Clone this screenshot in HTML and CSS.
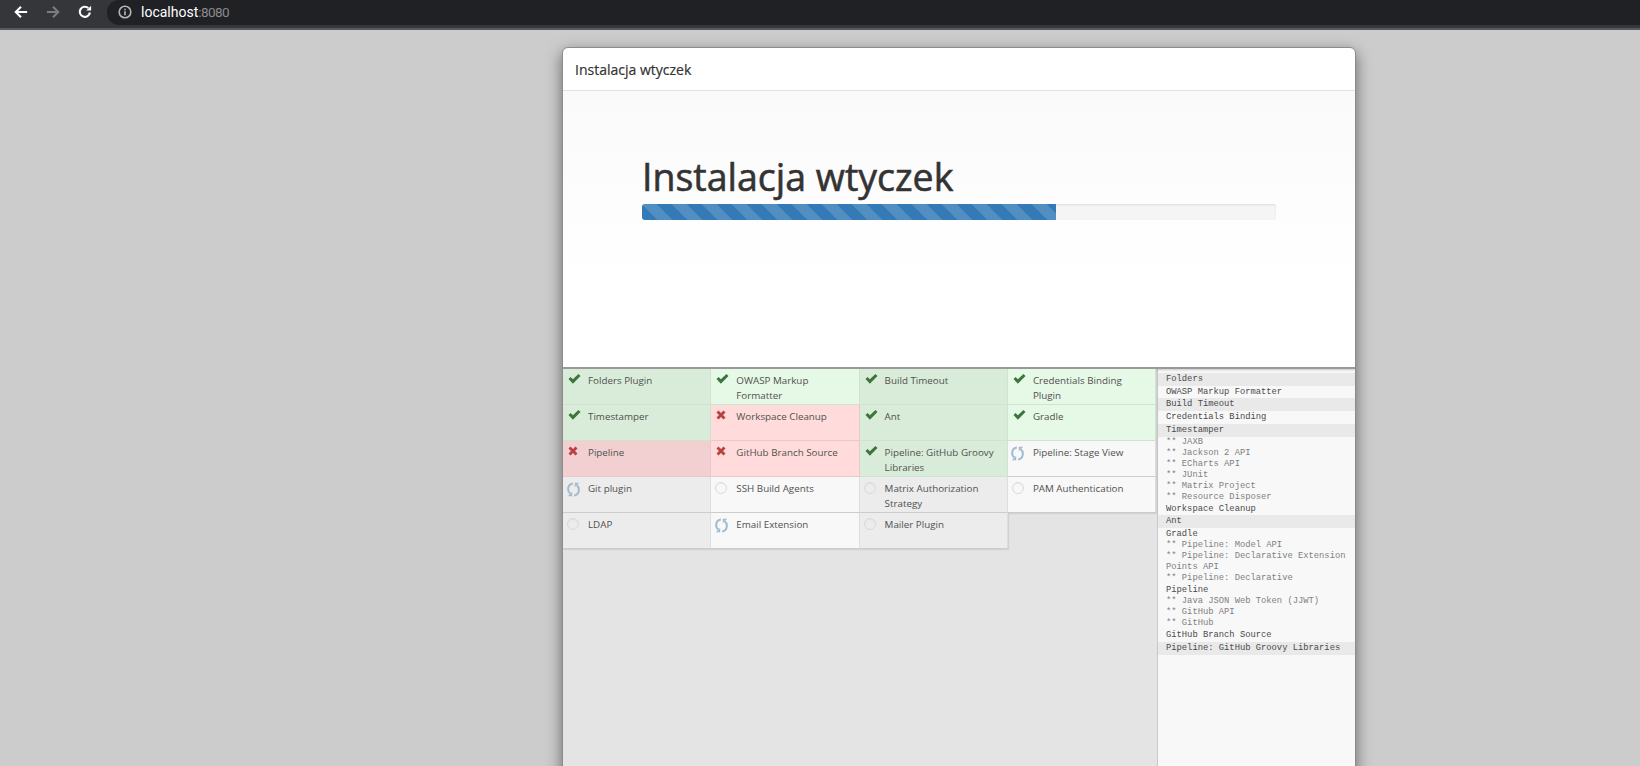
FILE: index.html
```html
<!DOCTYPE html>
<html lang="pl">
<head>
  <meta charset="UTF-8" />
  <title>Instalacja wtyczek</title>
  <link rel="stylesheet" href="styles.css">
</head>
<body>
  <svg class="icon-defs" width="0" height="0">
    <symbol id="i-check" viewBox="0 0 14 11"><path d="M0.4 5.6 2.7 3.3 5.2 5.8 11.3 0 13.6 2.3 5.2 10.6z"/></symbol>
    <symbol id="i-cross" viewBox="0 0 12 12"><path d="M0.6 3 3 0.6 6 3.6 9 0.6 11.4 3 8.4 6 11.4 9 9 11.4 6 8.4 3 11.4 0.6 9 3.6 6z"/></symbol>
    <symbol id="i-spin" viewBox="0 0 12 14">
      <path class="arc" d="M5.4 1.4C2.6 1.9 1 4.1 1 6.8c0 1.7.7 3.1 1.9 4"/>
      <path d="M.7 13.2 4.8 13.4 4.8 9.2z"/>
      <path class="arc" d="M6.6 12.6c2.8-.5 4.4-2.7 4.4-5.4 0-1.7-.7-3.1-1.9-4"/>
      <path d="M11.3.8 7.2 .6 7.2 4.8z"/>
    </symbol>
  </svg>

  <header class="toolbar">
    <div class="nav-buttons">
      <svg class="nav-icon" viewBox="0 0 16 16"><path d="M15 8H2M8 2 2 8l6 6"/></svg>
      <svg class="nav-icon nav-disabled" viewBox="0 0 16 16"><path d="M1 8h13M8 2l6 6-6 6"/></svg>
      <svg class="nav-icon" viewBox="0 0 16 16"><path d="M13.6 8.6A5.8 5.8 0 1 1 11.8 3.5"/><path class="fill" d="M9.4 6.4H15V.8z"/></svg>
    </div>
    <div class="address">
      <svg class="info-icon" viewBox="0 0 14 14"><circle cx="7" cy="7" r="5.8"/><path d="M7 6.2v4M7 3.8v1.4"/></svg>
      <span class="host">localhost</span><span class="port">:8080</span>
    </div>
  </header>

  <main class="page">
    <div class="modal">
      <div class="modal-title">Instalacja wtyczek</div>
      <div class="modal-top">
        <h1>Instalacja wtyczek</h1>
        <div class="progress"><div class="progress-bar"></div></div>
      </div>
      <div class="modal-lower">
        <div class="plugins">
          <div class="plugin ok"><svg class="ico"><use href="#i-check"/></svg>Folders Plugin</div>
          <div class="plugin ok"><svg class="ico"><use href="#i-check"/></svg>OWASP Markup Formatter</div>
          <div class="plugin ok"><svg class="ico"><use href="#i-check"/></svg>Build Timeout</div>
          <div class="plugin ok"><svg class="ico"><use href="#i-check"/></svg>Credentials Binding Plugin</div>
          <div class="plugin ok dark"><svg class="ico"><use href="#i-check"/></svg>Timestamper</div>
          <div class="plugin fail light"><svg class="ico"><use href="#i-cross"/></svg>Workspace Cleanup</div>
          <div class="plugin ok dark"><svg class="ico"><use href="#i-check"/></svg>Ant</div>
          <div class="plugin ok light"><svg class="ico"><use href="#i-check"/></svg>Gradle</div>
          <div class="plugin fail"><svg class="ico"><use href="#i-cross"/></svg>Pipeline</div>
          <div class="plugin fail"><svg class="ico"><use href="#i-cross"/></svg>GitHub Branch Source</div>
          <div class="plugin ok"><svg class="ico"><use href="#i-check"/></svg>Pipeline: GitHub Groovy Libraries</div>
          <div class="plugin busy"><svg class="ico"><use href="#i-spin"/></svg>Pipeline: Stage View</div>
          <div class="plugin busy dark"><svg class="ico"><use href="#i-spin"/></svg>Git plugin</div>
          <div class="plugin wait light"><span class="ring"></span>SSH Build Agents</div>
          <div class="plugin wait dark"><span class="ring"></span>Matrix Authorization Strategy</div>
          <div class="plugin wait light"><span class="ring"></span>PAM Authentication</div>
          <div class="plugin wait"><span class="ring"></span>LDAP</div>
          <div class="plugin busy"><svg class="ico"><use href="#i-spin"/></svg>Email Extension</div>
          <div class="plugin wait"><span class="ring"></span>Mailer Plugin</div>
        </div>
        <div class="log">
          <div class="log-line odd">Folders</div>
          <div class="log-line">OWASP Markup Formatter</div>
          <div class="log-line odd">Build Timeout</div>
          <div class="log-line">Credentials Binding</div>
          <div class="log-line odd">Timestamper</div>
          <div class="log-dep">** JAXB</div>
          <div class="log-dep">** Jackson 2 API</div>
          <div class="log-dep">** ECharts API</div>
          <div class="log-dep">** JUnit</div>
          <div class="log-dep">** Matrix Project</div>
          <div class="log-dep">** Resource Disposer</div>
          <div class="log-line">Workspace Cleanup</div>
          <div class="log-line odd">Ant</div>
          <div class="log-line">Gradle</div>
          <div class="log-dep">** Pipeline: Model API</div>
          <div class="log-dep">** Pipeline: Declarative Extension Points API</div>
          <div class="log-dep">** Pipeline: Declarative</div>
          <div class="log-line">Pipeline</div>
          <div class="log-dep">** Java JSON Web Token (JJWT)</div>
          <div class="log-dep">** GitHub API</div>
          <div class="log-dep">** GitHub</div>
          <div class="log-line">GitHub Branch Source</div>
          <div class="log-line odd">Pipeline: GitHub Groovy Libraries</div>
        </div>
      </div>
    </div>
  </main>
</body>
</html>
```

FILE: styles.css
```css
html, body {
  margin: 0;
  height: 100%;
  overflow: hidden;
}
body {
  font-family: "Open Sans", sans-serif;
  background: #ccc;
  display: flex;
  flex-direction: column;
}
.icon-defs {
  position: absolute;
}

/* browser chrome */
.toolbar {
  height: 30px;
  flex: none;
  box-sizing: border-box;
  display: flex;
  align-items: flex-start;
  background: #35363a;
  border-bottom: 2px solid #58595c;
}
.nav-buttons {
  width: 107px;
  flex: none;
  height: 24px;
  display: flex;
  align-items: center;
  padding-left: 14px;
  gap: 18px;
  box-sizing: border-box;
}
.nav-icon {
  width: 14px;
  height: 14px;
  fill: none;
  stroke: #fff;
  stroke-width: 2.4;
}
.nav-icon .fill {
  fill: #fff;
  stroke: none;
}
.nav-disabled {
  stroke: #7b7c7f;
}
.address {
  flex: 1;
  height: 25px;
  background: #202124;
  border-radius: 12px 0 0 12px;
  display: flex;
  align-items: center;
  padding: 0 0 1px 11px;
  box-sizing: border-box;
  font-family: "Roboto", sans-serif;
  font-size: 14px;
}
.info-icon {
  width: 14px;
  height: 14px;
  margin-right: 9px;
  fill: none;
  stroke: #b5b6b8;
  stroke-width: 1.6;
}
.host {
  color: #fff;
}
.port {
  color: #8a8b8e;
  font-size: 13.5px;
  letter-spacing: -0.6px;
}

/* modal */
.page {
  flex: 1;
  min-height: 0;
}
.modal {
  width: 794px;
  height: 760px;
  margin: 17px 0 0 562px;
  background: #fff;
  border: 1px solid #8c8c8c;
  border-radius: 6px;
  box-shadow: 0 5px 15px rgba(0, 0, 0, 0.5);
  box-sizing: border-box;
  overflow: hidden;
  display: flex;
  flex-direction: column;
}
.modal-title {
  height: 43px;
  flex: none;
  box-sizing: border-box;
  padding: 14px 12px 0;
  font-size: 14px;
  line-height: 16px;
  color: #333;
  -webkit-text-stroke: 0.2px #333;
  border-bottom: 1px solid #e5e5e5;
}
.modal-top {
  height: 278px;
  flex: none;
  box-sizing: border-box;
  padding: 59px 79px 0;
  background: linear-gradient(#fafafa, #fff 70%);
  border-bottom: 2px solid #999;
  position: relative;
  box-shadow: 0 1px 2px rgba(0, 0, 0, 0.2);
}
h1 {
  margin: 0;
  font-size: 37.5px;
  line-height: 54px;
  font-weight: 400;
  -webkit-text-stroke: 0.6px #333;
  color: #333;
}
.progress {
  height: 16px;
  background: #f5f5f5;
  border-radius: 3px;
  box-shadow: inset 0 1px 2px rgba(0, 0, 0, 0.1);
  overflow: hidden;
}
.progress-bar {
  width: 65.3%;
  height: 100%;
  background-color: #337ab7;
  background-image: linear-gradient(45deg, rgba(255,255,255,.15) 25%, transparent 25%, transparent 50%, rgba(255,255,255,.15) 50%, rgba(255,255,255,.15) 75%, transparent 75%, transparent);
  background-size: 30px 30px;
}

/* lower pane */
.modal-lower {
  flex: 1;
  min-height: 0;
  display: flex;
  background: #e4e4e4;
}
.plugins {
  width: 594px;
  flex: none;
  display: flex;
  flex-wrap: wrap;
  align-content: flex-start;
}
.plugin {
  width: 148.3px;
  height: 36px;
  box-sizing: border-box;
  padding: 4px 6px 0 25px;
  position: relative;
  font-size: 9.8px;
  line-height: 15px;
  color: #505050;
  border-right: 1px solid #ddd;
  border-bottom: 1px solid #ccc;
  background: #f8f8f8;
  box-shadow: 1px 1px 1px rgba(0, 0, 0, 0.08);
}
.plugin:nth-child(odd) {
  background: #ececec;
}
.plugin.ok { background: #e6f8e6; border-color: #cfe3cf; }
.plugin.ok:nth-child(odd) { background: #d8ecd9; }
.plugin.fail { background: #ffdcdb; border-color: #e8c8c8; }
.plugin.fail:nth-child(odd) { background: #f2d0d2; }
.plugin.ok.dark { background: #d8ecd9; }
.plugin.ok.light { background: #e6f8e6; }
.plugin.fail.light { background: #ffdcdb; }
.plugin.busy.dark, .plugin.wait.dark { background: #ececec; }
.plugin.wait.light { background: #f8f8f8; }

.ico {
  position: absolute;
  left: 5px;
  top: 5px;
  width: 13px;
  height: 10px;
}
.ok .ico { fill: #3c763d; }
.fail .ico { fill: #b94141; width: 10px; height: 10px; }
.busy .ico {
  fill: #a2bccf;
  left: 3.5px;
  top: 4.5px;
  width: 13px;
  height: 15px;
}
.arc {
  fill: none;
  stroke: #a2bccf;
  stroke-width: 1.9;
}
.ring {
  position: absolute;
  left: 4px;
  top: 5px;
  width: 12px;
  height: 12px;
  box-sizing: border-box;
  border: 1.5px solid #dadada;
  border-radius: 50%;
  box-shadow: inset 0 1px 1px rgba(0, 0, 0, 0.05);
}
.log {
  flex: 1;
  min-width: 0;
  box-sizing: border-box;
  padding-top: 4px;
  background: #f8f8f8;
  border-left: 1px solid #c8c8c8;
  font-family: "Liberation Mono", monospace;
  font-size: 8.8px;
  line-height: 11px;
  color: #4a4a4a;
}
.log-line {
  padding: 1px 8px 0;
  height: 11.3px;
}
.log-line.odd {
  background: #e9e9e9;
  height: 12px;
}
.log-dep {
  padding: 0 8px;
  color: #808080;
}
```
